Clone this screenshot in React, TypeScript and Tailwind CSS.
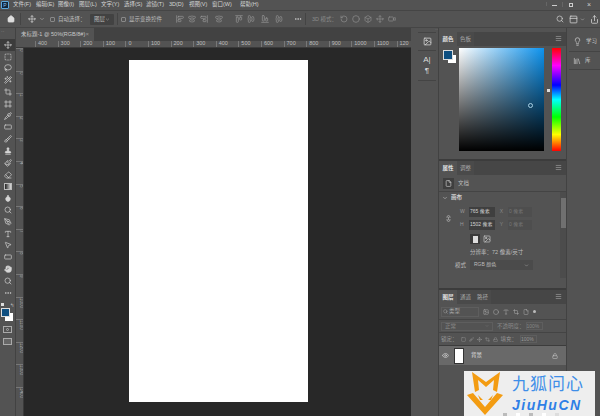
import {
  AlignCenterHorizontal,
  AlignCenterVertical,
  AlignEndHorizontal,
  AlignEndVertical,
  AlignStartHorizontal,
  AlignStartVertical,
  Box,
  Brush,
  ChevronDown,
  Circle,
  Crop,
  Droplet,
  Ellipsis,
  Eraser,
  Eye,
  File,
  Frame,
  Hand,
  Home,
  Image as ImageIcon,
  Lasso,
  Library,
  Lightbulb,
  Link2,
  Lock,
  Menu,
  MousePointer2,
  Move,
  Paintbrush,
  PanelTop,
  PenTool,
  Pipette,
  RectangleHorizontal,
  RotateCcw,
  Search,
  Share,
  Square,
  SquareDashed,
  Stamp,
  Type,
  Video,
  Wand2,
} from "lucide-react";

const menus = [
  { label: "文件(F)", w: "w-[23px]" },
  { label: "编辑(E)", w: "w-[22px]" },
  { label: "图像(I)", w: "w-[21px]" },
  { label: "图层(L)", w: "w-[22px]" },
  { label: "文字(Y)", w: "w-[23px]" },
  { label: "选择(S)", w: "w-[22px]" },
  { label: "滤镜(T)", w: "w-[23px]" },
  { label: "3D(D)", w: "w-[20px]" },
  { label: "视图(V)", w: "w-[23px]" },
  { label: "窗口(W)", w: "w-[28px]" },
  { label: "帮助(H)", w: "w-[22px]" },
];
const hRuler = ["400", "300", "200", "100", "0", "100", "200", "300", "400", "500", "600", "700", "800", "900", "1000", "1100"];
const vRuler = ["0", "0", "1", "2", "3", "4", "5", "6", "7", "8", "9", "1000", "1100", "1200", "1300", "1400"];

const tools = [Move, SquareDashed, Lasso, Wand2, Crop, Frame, Pipette, RectangleHorizontal, Brush, Stamp, Paintbrush, Eraser, null, Droplet, Search, PenTool, Type, MousePointer2, RectangleHorizontal, Hand, Search, Ellipsis];

function Tabs({ items }: { items: string[] }) {
  return (
    <div className="flex h-[14px] shrink-0 items-stretch justify-between bg-[#464646] pr-1">
      <div className="flex">
        {items.map((t, i) => (
          <span key={t} className={i === 0 ? "flex w-[18px] items-center justify-center bg-[#535353] text-[5.5px] font-bold text-[#e4e4e4]" : "flex w-[17px] items-center justify-center bg-[#4a4a4a] text-[5.5px] text-[#a8a8a8]"}>
            {t}
          </span>
        ))}
      </div>
      <Menu className="mt-[3px] size-[7px] text-[#aaa]" />
    </div>
  );
}

export default function App() {
  return (
    <div className="relative flex h-[416px] w-[600px] flex-col overflow-hidden bg-[#535353] font-['Liberation_Sans','Noto_Sans_CJK_SC',sans-serif] text-[#cfcfcf]">
      {/* menu */}
      <div className="flex h-[10px] shrink-0 items-center pl-[1px]">
        <span className="mr-[4px] flex size-[8px] shrink-0 items-center justify-center rounded-[1px] border border-[#5da9dc] bg-[#10263c] text-[5px] leading-none text-[#8cc8f0]">P</span>
        <div className="flex text-[5.5px] leading-none text-[#d4d4d4]">
          {menus.map((m) => (
            <span key={m.label} className={m.w + " whitespace-nowrap"}>{m.label}</span>
          ))}
        </div>
        <div className="ml-auto flex h-[6px] items-start">
          <span className="flex w-[16px] justify-center border-l border-[#666]"><span className="mt-[3px] h-[1px] w-[5px] bg-[#ccc]" /></span>
          <span className="flex w-[16px] justify-center border-l border-[#666]"><span className="mt-[1px] size-[4px] border border-[#ccc]" /></span>
          <span className="w-[22px] text-center text-[7px] leading-[6px]">×</span>
        </div>
      </div>

      {/* options */}
      <div className="flex h-[18px] shrink-0 items-center border-y border-[#454545] pl-[7px] pr-[1px] text-[5.5px] text-[#bdbdbd]">
        <Home className="size-[8px] fill-[#ddd] text-[#ddd]" />
        <span className="ml-[5px] h-[12px] border-l border-[#444]" />
        <Move className="ml-[7px] size-[8px] text-[#ddd]" />
        <ChevronDown className="ml-[3px] size-[6px]" />
        <span className="ml-[5px] size-[5px] rounded-[1px] border border-[#888]" />
        <span className="ml-[3px] w-[29px] whitespace-nowrap">自动选择：</span>
        <span className="ml-[3px] flex h-[11px] w-[24px] items-center justify-between rounded-[1px] bg-[#424242] px-[4px] whitespace-nowrap">图层<ChevronDown className="size-[5px]" /></span>
        <span className="ml-[3px] h-[12px] border-l border-[#444]" />
        <span className="ml-[3px] size-[5px] rounded-[1px] border border-[#888]" />
        <span className="ml-[3px] w-[33px] whitespace-nowrap">显示变换控件</span>
        <div className="ml-[14px] flex shrink-0 gap-[4px] text-[#9a9a9a]">
          <AlignStartVertical className="size-[8px]" />
          <AlignCenterVertical className="size-[8px]" />
          <AlignEndVertical className="size-[8px]" />
          <AlignCenterVertical className="ml-[3px] size-[8px]" />
        </div>
        <div className="ml-[12px] flex shrink-0 gap-[4px] text-[#9a9a9a]">
          <AlignStartHorizontal className="size-[8px]" />
          <AlignCenterHorizontal className="size-[8px]" />
          <AlignEndHorizontal className="ml-[2px] size-[8px]" />
          <AlignCenterHorizontal className="ml-[2px] size-[8px]" />
        </div>
        <Ellipsis className="ml-[11px] size-[8px] text-[#ddd]" />
        <span className="ml-[3px] h-[12px] border-l border-[#444]" />
        <span className="ml-[6px] w-[26px] whitespace-nowrap text-[#8b8b8b]">3D 模式：</span>
        <div className="ml-[2px] flex shrink-0 gap-[4px] text-[#8f8f8f]">
          <RotateCcw className="size-[8px]" />
          <Circle className="size-[8px]" />
          <Box className="size-[8px]" />
          <Move className="size-[8px]" />
          <Video className="size-[8px]" />
        </div>
        <div className="ml-auto flex items-center gap-[5px] text-[#d8d8d8]">
          <Search className="size-[8px]" />
          <span className="flex items-center gap-[2px]"><PanelTop className="size-[9px]" /><ChevronDown className="size-[5px]" /></span>
          <Share className="size-[9px]" />
        </div>
      </div>

      <div className="flex min-h-0 flex-1">
        {/* tools */}
        <div className="flex w-[16px] shrink-0 flex-col items-start border-r border-[#424242]">
          <span className="mb-[5px] ml-[1px] h-[6px] text-[5px] leading-[6px] text-[#999]">··</span>
          {tools.map((Icon, i) => (
            <div key={i} className={i === 0 ? "flex h-[11.8px] w-[15px] items-center justify-center bg-[#3c3c3c]" : "flex h-[11.8px] w-[15px] items-center justify-center"}>
              {Icon ? (
                <Icon className={i === 9 || i === 13 || i === 19 ? "size-[8px] fill-[#d6d6d6] text-[#d6d6d6]" : "size-[8px] text-[#d6d6d6]"} />
              ) : (
                <span className="h-[7px] w-[8px] border border-[#bbb] bg-[linear-gradient(to_right,#222,#ddd)]" />
              )}
            </div>
          ))}
          <div className="relative mt-[4px] h-[22px] w-[15px]">
            <span className="absolute left-[1px] top-0 size-[3px] bg-[#ddd]" />
            <span className="absolute left-[10px] top-0 text-[5px] leading-[5px] text-[#ccc]">↰</span>
            <span className="absolute left-[5px] top-[10px] size-[8px] bg-white" />
            <span className="absolute left-[1px] top-[5px] size-[9px] border border-[#ddd] bg-[#0f4f80]" />
          </div>
          <span className="ml-[3px] mt-[1px] flex h-[7px] w-[9px] items-center justify-center border border-[#aaa]"><span className="size-[3px] rounded-full border border-[#aaa]" /></span>
          <span className="ml-[3px] mt-[5px] h-[7px] w-[9px] border border-[#aaa] bg-[#666]" />
        </div>

        {/* document */}
        <div className="flex w-[395px] shrink-0 flex-col">
          <div className="flex h-[13px] shrink-0 bg-[#424242]">
            <div className="flex w-[78px] items-center justify-between bg-[#535353] px-[5px] text-[5.5px] whitespace-nowrap text-[#c8c8c8]">
              未标题-1 @ 50%(RGB/8#)
              <span className="text-[6px] text-[#999]">×</span>
            </div>
          </div>
          <div className="flex h-[7px] shrink-0 items-center overflow-hidden border-b border-[#3a3a3a] pl-[19px] text-[5.5px] leading-none text-[#bdbdbd]">
            {hRuler.map((n, i) => (
              <span key={i} className="w-[22.6px] shrink-0 border-l border-[#777] pl-[2px]">{n}</span>
            ))}
            <span className="shrink-0 border-l border-[#777] pl-[2px]">120</span>
          </div>
          <div className="flex min-h-0 flex-1">
            <div className="flex w-[8px] shrink-0 flex-col overflow-hidden border-r border-[#3a3a3a] text-[4.5px] leading-none text-[#aaa]">
              {vRuler.map((n, i) => (
                <span key={i} className="h-[22.6px] shrink-0 border-t border-[#777] pl-[1px] [writing-mode:vertical-rl]">{n}</span>
              ))}
            </div>
            <div className="flex flex-1 justify-start bg-[#282828] pl-[105px] pt-[12px]">
              <div className="h-[342px] w-[179px] bg-white" />
            </div>
          </div>
        </div>

        {/* collapsed dock */}
        <div className="flex w-[27px] shrink-0 flex-col pl-[7px]">
          <div className="h-[4px] shrink-0 text-right text-[4px] leading-[4px] text-[#aaa]">··</div>
          <div className="flex h-[19px] w-[18px] shrink-0 items-center justify-center border-y border-[#444]">
            <ImageIcon className="size-[9px] text-[#ddd]" />
          </div>
          <div className="flex h-[30px] w-[18px] shrink-0 flex-col items-center justify-center gap-[3px] border-b border-[#444] text-[8px] leading-none text-[#ddd]">
            <span>A|</span>
            <span>¶</span>
          </div>
        </div>

        {/* panels */}
        <div className="flex w-[129px] shrink-0 flex-col border-x border-[#424242] pt-[4px]">
          {/* colour */}
          <div className="flex h-[129px] shrink-0 flex-col border-b-2 border-[#3c3c3c]">
            <Tabs items={["颜色", "色板"]} />
            <div className="flex flex-1 pl-[4px] pt-[2px]">
              <div className="relative mt-[2px] size-[14px] shrink-0">
                <span className="absolute left-[5px] top-[5px] size-[8px] bg-white" />
                <span className="absolute left-0 top-0 size-[10px] border border-[#ddd] bg-[#0f4f80]" />
              </div>
              <div className="relative ml-[2px] h-[103px] w-[85px] shrink-0 bg-[linear-gradient(to_bottom,transparent,#000),linear-gradient(to_right,#fff,#0d93ee)]">
                <span className="absolute left-[69px] top-[55px] size-[5px] rounded-full border border-[#a8d0e4]" />
              </div>
              <div className="relative ml-[8px] h-[103px] w-[9px] shrink-0 bg-[linear-gradient(to_bottom,#f00,#f0f_17%,#00f_36%,#0ff_50%,#0f0_67%,#ff0_84%,#f00)]">
                <span className="absolute left-[-5px] top-[41px] size-[3px] bg-[#ddd]" />
              </div>
            </div>
          </div>
          {/* properties */}
          <div className="flex h-[129px] shrink-0 flex-col border-b-2 border-[#3c3c3c] text-[5.5px] text-[#bdbdbd]">
            <Tabs items={["属性", "调整"]} />
            <div className="flex h-[17px] shrink-0 items-center gap-[4px] border-b border-[#444] pl-[4px]">
              <span className="flex size-[11px] items-center justify-center bg-[#3f3f3f]"><File className="size-[7px] text-[#ddd]" /></span>
              文档
            </div>
            <div className="flex min-h-0 flex-1">
              <div className="flex min-w-0 flex-1 flex-col">
                <div className="flex h-[11px] shrink-0 items-center gap-[3px] pl-[3px] font-bold text-[#d0d0d0]">
                  <ChevronDown className="size-[6px]" />画布
                </div>
                <div className="mt-[4px] flex items-center pl-[6px]">
                  <Link2 className="mr-[8px] size-[7px] rotate-90 text-[#ccc]" />
                  <div className="flex flex-col gap-[3px]">
                    {[["W", "765 像素", "X"], ["H", "1502 像素", "Y"]].map(([a, b, c]) => (
                      <div key={a} className="flex items-center text-[5px]">
                        <span className="w-[9px] text-[#999]">{a}</span>
                        <span className="flex h-[10px] w-[26px] items-center bg-[#3f3f3f] pl-[1px] whitespace-nowrap text-[#d4d4d4]">{b}</span>
                        <span className="w-[13px] text-center text-[#888]">{c}</span>
                        <span className="flex h-[10px] w-[24px] items-center bg-[#4e4e4e] pl-[1px] text-[#777]">0 像素</span>
                      </div>
                    ))}
                  </div>
                </div>
                <div className="ml-[31px] mt-[4px] flex items-center gap-[2px]">
                  <span className="flex size-[10px] items-center justify-center bg-[#3a3a3a]"><span className="h-[7px] w-[5px] bg-[#ddd]" /></span>
                  <span className="flex size-[10px] items-center justify-center"><ImageIcon className="size-[8px] text-[#ccc]" /></span>
                </div>
                <div className="ml-[31px] mt-[5px] whitespace-nowrap leading-[7px]">分辨率：72 像素/英寸</div>
                <div className="mt-[4px] flex items-center pl-[16px]">
                  <span className="w-[15px]">模式</span>
                  <span className="flex h-[10px] w-[63px] items-center justify-between bg-[#4b4b4b] px-[4px] text-[5px]">RGB 颜色<ChevronDown className="size-[5px]" /></span>
                </div>
              </div>
              <div className="flex h-[86px] w-[6px] shrink-0 flex-col items-center bg-[#4c4c4c] pt-[6px]">
                <div className="h-[30px] w-[5px] bg-[#707070]" />
              </div>
            </div>
          </div>
          {/* layers */}
          <div className="flex min-h-0 flex-1 flex-col text-[5.5px] text-[#aaa]">
            <Tabs items={["图层", "通道", "路径"]} />
            <div className="flex h-[16px] shrink-0 items-center gap-[4px] border-b border-[#444] pl-[2px]">
              <span className="flex h-[10px] w-[38px] items-center gap-[1px] border border-[#5e5e5e] pl-[1px]"><Search className="size-[5px]" />类型</span>
              <ImageIcon className="size-[6px]" />
              <Circle className="size-[6px]" />
              <Type className="size-[6px]" />
              <Crop className="size-[6px]" />
              <File className="size-[6px]" />
              <span className="size-[3px] rounded-full bg-[#bbb]" />
            </div>
            <div className="flex h-[13px] shrink-0 items-center border-b border-[#444] pl-[2px] text-[#888]">
              <span className="flex h-[9px] w-[52px] items-center justify-between border border-[#5e5e5e] px-[3px]">正常<ChevronDown className="size-[4px]" /></span>
              <span className="ml-[4px] whitespace-nowrap">不透明度：</span>
              <span className="ml-[1px] h-[8px] w-[17px] border border-[#5e5e5e] text-[5px] leading-[6px]">100%</span>
            </div>
            <div className="flex h-[13px] shrink-0 items-center gap-[3px] border-b border-[#3c3c3c] pl-[2px] text-[#999]">
              锁定：
              <Square className="size-[5px]" />
              <Brush className="size-[5px]" />
              <Move className="size-[5px]" />
              <Crop className="size-[5px]" />
              <Lock className="size-[5px]" />
              <span className="whitespace-nowrap">填充：</span>
              <span className="h-[8px] w-[17px] border border-[#5e5e5e] text-[5px] leading-[6px]">100%</span>
            </div>
            <div className="flex h-[19px] shrink-0 items-center bg-[#696969] pl-[3px] pr-[8px] text-[#e0e0e0]">
              <Eye className="size-[7px]" />
              <span className="ml-[5px] h-[16px] w-[10px] border border-[#333] bg-white" />
              <span className="ml-[7px] text-[5.5px]">背景</span>
              <Lock className="ml-auto size-[6px] text-[#ccc]" />
            </div>
          </div>
        </div>

        {/* learn dock */}
        <div className="flex min-w-0 flex-1 flex-col pl-[2px] pt-[4px] text-[5.5px] text-[#c8c8c8]">
          <div className="flex h-[20px] items-center gap-[4px] border-b border-[#444] pl-[4px]"><Lightbulb className="size-[9px]" />学习</div>
          <div className="flex h-[18px] items-center gap-[4px] border-b border-[#444] pl-[4px]"><Library className="size-[8px]" />库</div>
        </div>
      </div>

      {/* watermark */}
      <div className="absolute bottom-0 right-[5px] flex h-[45px] w-[131px] items-start bg-[#eeeeee]">
        <svg viewBox="0 0 50 46" className="h-[46px] w-[50px] shrink-0" fill="none">
          <path d="M8 1 L22 11 L36 1 L33 21 L29 19 L30 9 L22 16 L14 9 L15 19 L11 21 Z" fill="#f39c12" />
          <path d="M3 24 L21 44 L39 24 L33 22 L21 36 L9 22 Z" fill="#f39c12" />
          <path d="M14 24 L19 29 L16 29 Z M29 24 L24 29 L27 29 Z" fill="#f39c12" />
        </svg>
        <div className="-ml-[2px] flex flex-col items-start">
          <span className="text-[17px] leading-[27px] tracking-[1px] whitespace-nowrap text-[#3f8ee8]">九狐问心</span>
          <span className="text-[14px] leading-[14px] font-bold tracking-[1.5px] whitespace-nowrap text-[#2f7fe6] italic">JiuHuCN</span>
        </div>
        <div className="absolute bottom-0 left-[39px] flex gap-[9px]">
          <span className="h-[3px] w-[4px] bg-[#bbb]" />
          <span className="h-[3px] w-[4px] bg-white" />
          <span className="h-[3px] w-[4px] bg-[#bbb]" />
          <span className="h-[3px] w-[4px] bg-white" />
          <span className="h-[3px] w-[4px] bg-[#ddd]" />
        </div>
      </div>
    </div>
  );
}
